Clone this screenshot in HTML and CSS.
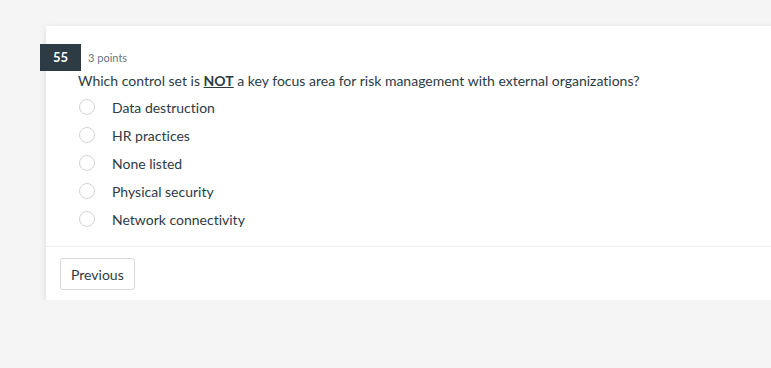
FILE: index.html
```html
<!DOCTYPE html>
<html lang="en">
<head>
    <meta charset="UTF-8">
    <meta name="viewport" content="width=device-width, initial-scale=1.0">
    <title>Quiz Question</title>
    <link rel="stylesheet" href="styles.css">
</head>
<body>
    <div class="page">
        <div class="card">
            <div class="question">
                <div class="question-header">
                    <span class="badge">55</span>
                    <span class="points">3 points</span>
                </div>
                <p class="question-text">Which control set is <u><b>NOT</b></u> a key focus area for risk management with external organizations?</p>
                <div class="answers">
                    <label class="answer"><span class="radio"></span>Data destruction</label>
                    <label class="answer"><span class="radio"></span>HR practices</label>
                    <label class="answer"><span class="radio"></span>None listed</label>
                    <label class="answer"><span class="radio"></span>Physical security</label>
                    <label class="answer"><span class="radio"></span>Network connectivity</label>
                </div>
            </div>
            <div class="footer">
                <button class="btn">Previous</button>
            </div>
        </div>
    </div>
</body>
</html>
```

FILE: styles.css
```css
body {
    margin: 0;
    background: #f5f5f5;
    font-family: Lato, "Open Sans", sans-serif;
    font-variant-ligatures: none;
    color: #2d3b45;
    overflow: hidden;
}
.page {
    padding: 26px 0 0 46px;
}
.card {
    width: 800px;
    background: #fff;
    box-shadow: 0 2px 6px rgba(0, 0, 0, 0.12);
}
.question {
    padding: 18px 0 13px 32px;
    border-bottom: 1px solid #eeeeee;
}
.question-header {
    display: flex;
    align-items: center;
    margin-left: -38px;
}
.badge {
    background: #2d3b45;
    color: #fff;
    font-weight: bold;
    font-size: 13px;
    height: 27px;
    line-height: 27px;
    padding: 0 13px;
}
.points {
    font-size: 11px;
    color: #6b7780;
    margin-left: 7px;
}
.question-text {
    margin: 0 0 2px;
    font-size: 14px;
    line-height: 20px;
}
.answer {
    display: flex;
    align-items: center;
    height: 28px;
    font-size: 14px;
}
.radio {
    width: 14px;
    height: 14px;
    border: 1px solid #cfd4d8;
    border-radius: 50%;
    margin: 0 17px 0 1px;
}
.footer {
    padding: 11px 0 10px 14px;
}
.btn {
    font-family: inherit;
    font-size: 14px;
    color: #2d3b45;
    background: #fff;
    border: 1px solid #d5d9dc;
    border-radius: 3px;
    height: 32px;
    padding: 0 10px;
}
```
